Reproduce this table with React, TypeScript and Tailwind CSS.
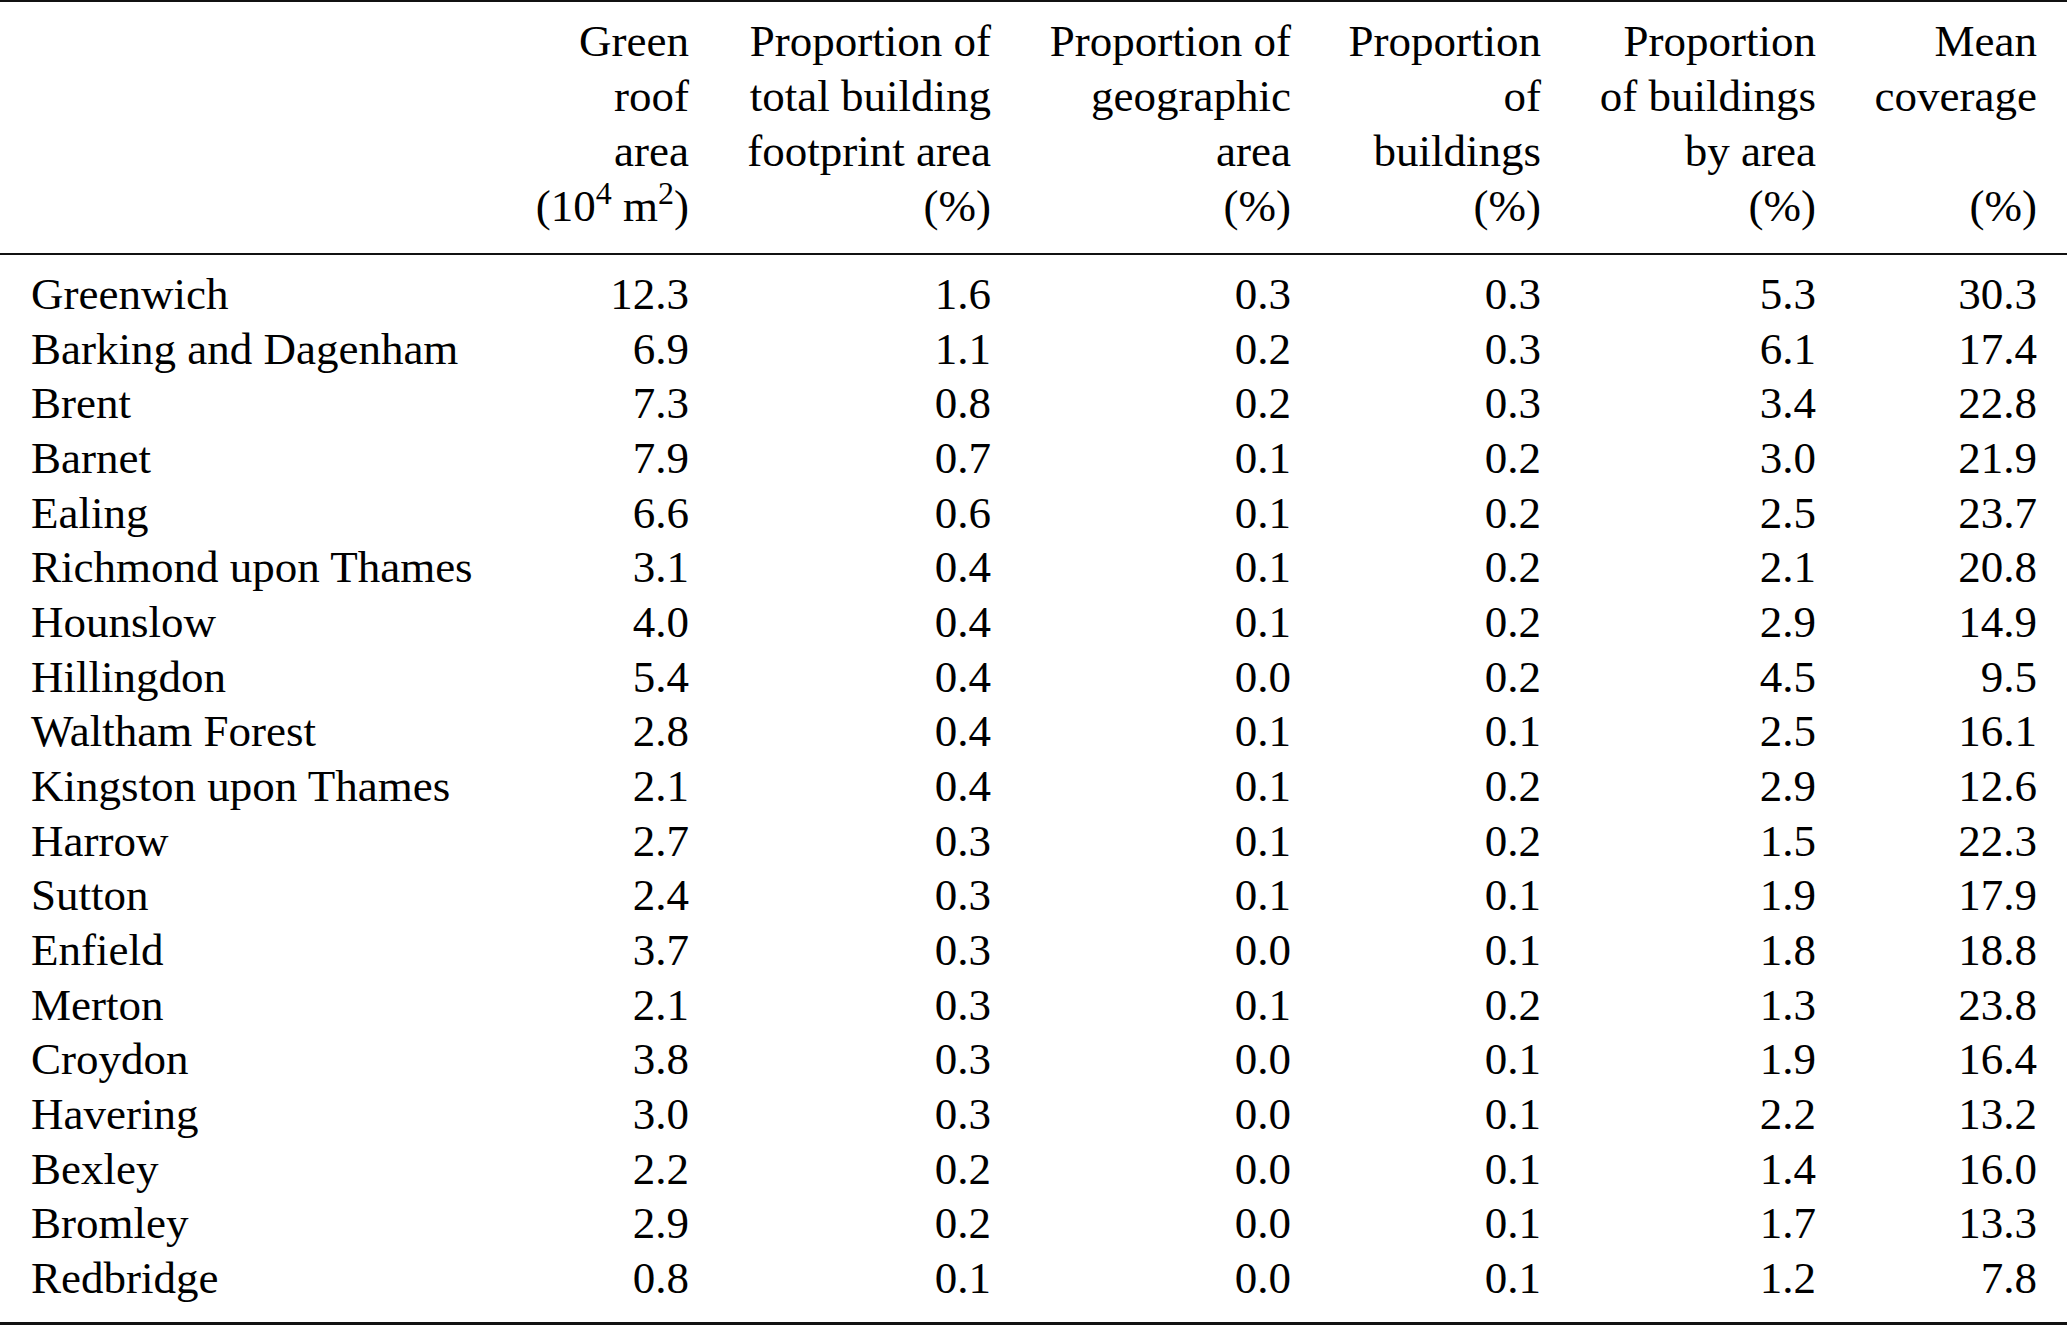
import React from "react";

const rows: [string, string, string, string, string, string, string][] = [
  ["Greenwich", "12.3", "1.6", "0.3", "0.3", "5.3", "30.3"],
  ["Barking and Dagenham", "6.9", "1.1", "0.2", "0.3", "6.1", "17.4"],
  ["Brent", "7.3", "0.8", "0.2", "0.3", "3.4", "22.8"],
  ["Barnet", "7.9", "0.7", "0.1", "0.2", "3.0", "21.9"],
  ["Ealing", "6.6", "0.6", "0.1", "0.2", "2.5", "23.7"],
  ["Richmond upon Thames", "3.1", "0.4", "0.1", "0.2", "2.1", "20.8"],
  ["Hounslow", "4.0", "0.4", "0.1", "0.2", "2.9", "14.9"],
  ["Hillingdon", "5.4", "0.4", "0.0", "0.2", "4.5", "9.5"],
  ["Waltham Forest", "2.8", "0.4", "0.1", "0.1", "2.5", "16.1"],
  ["Kingston upon Thames", "2.1", "0.4", "0.1", "0.2", "2.9", "12.6"],
  ["Harrow", "2.7", "0.3", "0.1", "0.2", "1.5", "22.3"],
  ["Sutton", "2.4", "0.3", "0.1", "0.1", "1.9", "17.9"],
  ["Enfield", "3.7", "0.3", "0.0", "0.1", "1.8", "18.8"],
  ["Merton", "2.1", "0.3", "0.1", "0.2", "1.3", "23.8"],
  ["Croydon", "3.8", "0.3", "0.0", "0.1", "1.9", "16.4"],
  ["Havering", "3.0", "0.3", "0.0", "0.1", "2.2", "13.2"],
  ["Bexley", "2.2", "0.2", "0.0", "0.1", "1.4", "16.0"],
  ["Bromley", "2.9", "0.2", "0.0", "0.1", "1.7", "13.3"],
  ["Redbridge", "0.8", "0.1", "0.0", "0.1", "1.2", "7.8"],
];

const headers: React.ReactNode[][] = [
  [
    "Green",
    "roof",
    "area",
    <span key="u">
      (10<sup className="text-[32px] top-[-17px]">4</sup> m<sup className="text-[32px] top-[-17px]">2</sup>)
    </span>,
  ],
  ["Proportion of", "total building", "footprint area", "(%)"],
  ["Proportion of", "geographic", "area", "(%)"],
  ["Proportion", "of", "buildings", "(%)"],
  ["Proportion", "of buildings", "by area", "(%)"],
  ["Mean", "coverage", "\u00a0", "(%)"],
];

const cols =
  "grid grid-cols-[500px_189px_302px_300px_250px_275px_221px_30px]";

export default function App() {
  return (
    <div className="w-[2067px] h-[1325px] bg-white text-black font-['Liberation_Serif',serif] text-[45px] overflow-hidden">
      <div className="border-t-2 border-[#111]">
        <div className={`${cols} pt-[12px] pb-[19px] border-b-2 border-[#111] leading-[55px]`}>
          <div />
          {headers.map((lines, i) => (
            <div key={i} className="text-right whitespace-nowrap">
              {lines.map((l, j) => (
                <div key={j}>{l}</div>
              ))}
            </div>
          ))}
          <div />
        </div>
        <div className={`${cols} pt-[12px] pb-[16px] border-b-[3px] border-[#111] leading-[54.67px]`}>
          {rows.map((r) => (
            <React.Fragment key={r[0]}>
              <div className="pl-[31px] whitespace-nowrap">{r[0]}</div>
              {r.slice(1).map((v, k) => (
                <div key={k} className="text-right">
                  {v}
                </div>
              ))}
              <div />
            </React.Fragment>
          ))}
        </div>
      </div>
    </div>
  );
}
